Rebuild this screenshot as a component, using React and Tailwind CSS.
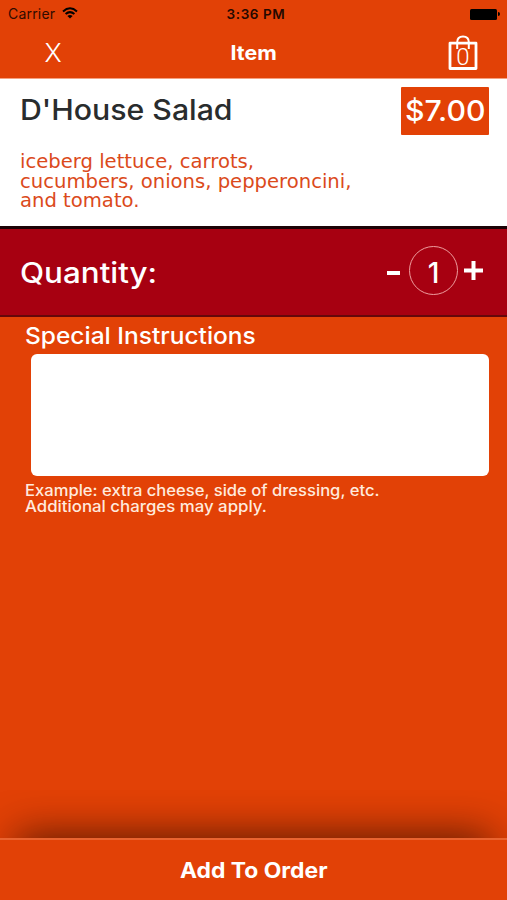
function StatusBar() {
  return (
    <div className="flex h-7 items-center justify-between text-black">
      <div className="flex w-[200px] items-center pl-2">
        <span className="text-[14px] leading-7 tracking-[0.2px] text-[#300b00]">Carrier</span>
        <svg className="ml-[7px] -mt-0.5" width="16" height="12" viewBox="0 0 16 12" fill="none" stroke="black" strokeWidth="2">
          <path d="M1 4.4 Q8 -1.9 15 4.4" />
          <path d="M3.6 7.1 Q8 3.2 12.4 7.1" />
          <path d="M8 11.6 L5.4 8.9 Q8 6.9 10.6 8.9 Z" fill="black" stroke="none" />
        </svg>
      </div>
      <span className="ml-[5px] text-[13.5px] font-semibold leading-7 tracking-[0.6px] text-[#240800]">3:36 PM</span>
      <div className="flex w-[200px] items-center justify-end pr-[7px]">
        <div className="h-[11px] w-[27px] rounded-[1.5px] bg-black" />
        <div className="ml-px h-1 w-[2px] rounded-r-full bg-black" />
      </div>
    </div>
  );
}

function Header() {
  return (
    <header className="h-[79px] border-b border-[#f5a080] bg-[#e24106] text-white">
      <StatusBar />
      <div className="flex h-[50px] items-center justify-between">
        <button className="ml-[44px] w-[18px] text-center text-[26px] font-light leading-[50px]">X</button>
        <h1 className="-ml-[2px] scale-x-[1.07] text-[20px] font-bold leading-[50px]">Item</h1>
        <svg className="mr-[29px] -mt-px" width="30" height="36" viewBox="0 0 30 36" fill="none" stroke="white">
          <path d="M2 8.2H28V33.5H2Z" strokeWidth="2.8" strokeLinejoin="round" />
          <path d="M9.2 14V7.2Q9.2 1.5 15 1.5T20.8 7.2V14" strokeWidth="2" />
          <text x="15" y="30" textAnchor="middle" fontSize="24" fontWeight="300" fill="white" stroke="none" fontFamily="Roboto">0</text>
        </svg>
      </div>
    </header>
  );
}

function ItemDetails() {
  return (
    <section className="h-[147px] bg-white pl-5 pr-[18px] pt-2">
      <div className="flex items-start justify-between">
        <h2 className="mt-[3px] origin-left scale-x-[1.08] whitespace-nowrap text-[28px] font-medium leading-10 text-[#292c2d]">D'House Salad</h2>
        <div className="flex h-12 w-[88px] items-center justify-center rounded-[1px] bg-[#e24106] text-white">
          <span className="scale-x-[1.08] text-[28px] font-medium">$7.00</span>
        </div>
      </div>
      <p className="mt-[17px] origin-left scale-x-[0.98] font-['DejaVu_Sans',sans-serif] text-[20px] leading-[19.6px] text-[#db4a1b]">
        iceberg lettuce, carrots,<br />cucumbers, onions, pepperoncini,<br />and tomato.
      </p>
    </section>
  );
}

function Quantity() {
  return (
    <section className="flex h-[91px] items-center justify-between border-b-2 border-t-[3px] border-b-[#65070a] border-t-[#1c0206] bg-[#a70011] pl-5 pr-6 text-white">
      <span className="mt-px origin-left scale-x-[1.12] text-[28px] font-medium leading-10">Quantity:</span>
      <div className="mb-[3px] flex items-center">
        <button aria-label="Decrease" className="mt-[5px] h-1 w-[13px] bg-white" />
        <div className="ml-[9px] flex size-[49px] items-center justify-center rounded-full border-[1.5px] border-[#ee9d9e] pt-1 text-[28px] font-medium">1</div>
        <button aria-label="Increase" className="ml-[6px]">
          <svg width="19" height="19" viewBox="0 0 19 19" stroke="white" strokeWidth="4">
            <path d="M0 9.5H19M9.5 0V19" />
          </svg>
        </button>
      </div>
    </section>
  );
}

function Instructions() {
  return (
    <section className="grow pl-[25px] pr-[18px] text-white">
      <h3 className="h-[37px] origin-left scale-x-[1.065] whitespace-nowrap text-[23px] font-medium leading-[38px]">Special Instructions</h3>
      <textarea aria-label="Special Instructions" className="ml-[6px] block h-[122px] w-[458px] resize-none rounded-[6px] bg-white" />
      <div className="mt-[7px] flex flex-col items-start whitespace-nowrap text-[15.5px] font-medium leading-[16px] text-[#ffeadd]">
        <span className="origin-left scale-x-[1.07]">Example: extra cheese, side of dressing, etc.</span>
        <span className="origin-left scale-x-[1.085]">Additional charges may apply.</span>
      </div>
    </section>
  );
}

function Footer() {
  return (
    <footer>
      <div className="h-[48px] overflow-hidden">
        <div className="mx-5 mt-[48px] h-10 shadow-[0_0_40px_3px_rgba(35,10,0,0.72)]" />
      </div>
      <button className="relative block h-[62px] w-full border-t-2 border-[#ea6430] bg-[#e24106] text-center text-[21px] font-bold leading-[62px] text-white">
        <span className="inline-block scale-x-[1.09]">Add To Order</span>
      </button>
    </footer>
  );
}

export default function App() {
  return (
    <main className="flex h-[900px] w-[507px] flex-col overflow-hidden bg-[#e24106] font-['Inter',sans-serif]">
      <Header />
      <ItemDetails />
      <Quantity />
      <Instructions />
      <Footer />
    </main>
  );
}
